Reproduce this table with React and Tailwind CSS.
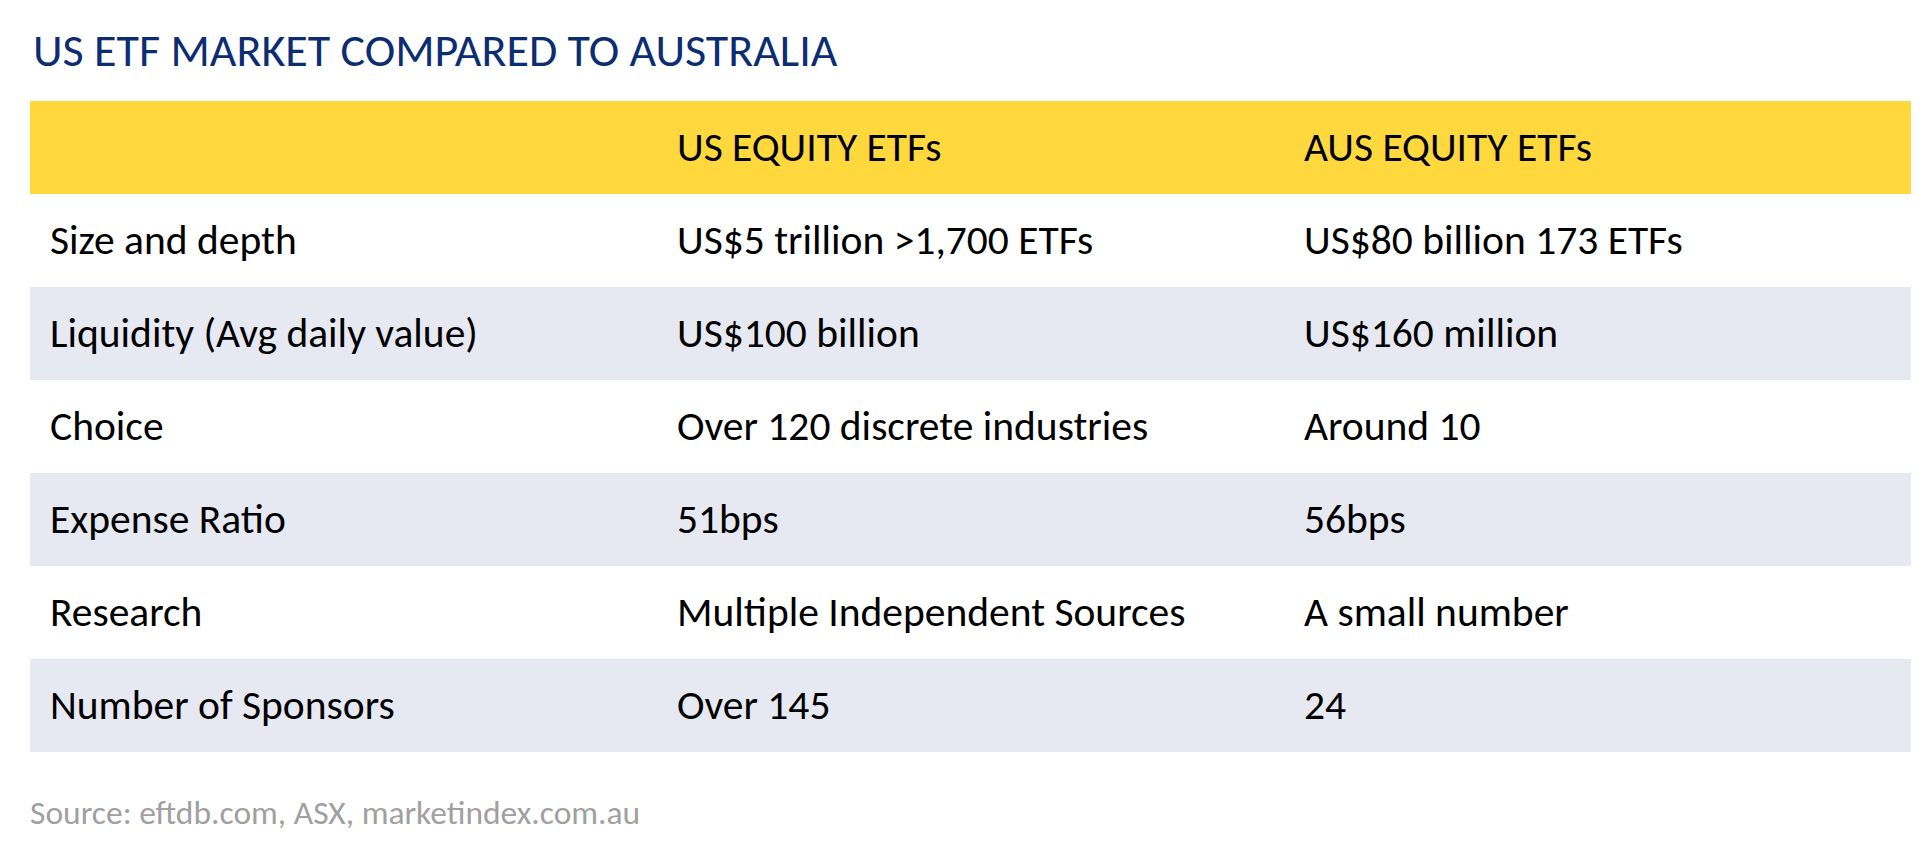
const ROWS = [
  ["Size and depth", "US$5 trillion >1,700 ETFs", "US$80 billion 173 ETFs"],
  ["Liquidity (Avg daily value)", "US$100 billion", "US$160 million"],
  ["Choice", "Over 120 discrete industries", "Around 10"],
  ["Expense Ratio", "51bps", "56bps"],
  ["Research", "Multiple Independent Sources", "A small number"],
  ["Number of Sponsors", "Over 145", "24"],
];

const FONT = { fontFamily: "Carlito, Calibri, Lato, 'Open Sans', sans-serif" };

const Cell = ({ children }) => (
  <div className="flex h-[93px] items-center pl-[20px] text-[41.5px] text-black">{children}</div>
);

export default function App() {
  return (
    <div className="min-h-screen w-[1929px] bg-white" style={FONT}>
      <h1 className="ml-[33px] pt-[27px] text-[46px] leading-[46px] font-normal text-[#0c2d72]">
        US ETF MARKET COMPARED TO AUSTRALIA
      </h1>

      <div className="ml-[30px] mt-[28px] w-[1881px]">
        <div className="grid grid-cols-3 bg-[#fed83c]">
          <Cell />
          <Cell>US EQUITY ETFs</Cell>
          <Cell>AUS EQUITY ETFs</Cell>
        </div>
        {ROWS.map((row, i) => (
          <div key={row[0]} className={`grid grid-cols-3 ${i % 2 === 1 ? "bg-[#e6e9f1]" : "bg-white"}`}>
            {row.map((text) => (
              <Cell key={text}>{text}</Cell>
            ))}
          </div>
        ))}
      </div>

      <p className="ml-[30px] mt-[44px] text-[33.5px] leading-[33.5px] text-[#a0a0a0]">
        Source: eftdb.com, ASX, marketindex.com.au
      </p>
    </div>
  );
}
